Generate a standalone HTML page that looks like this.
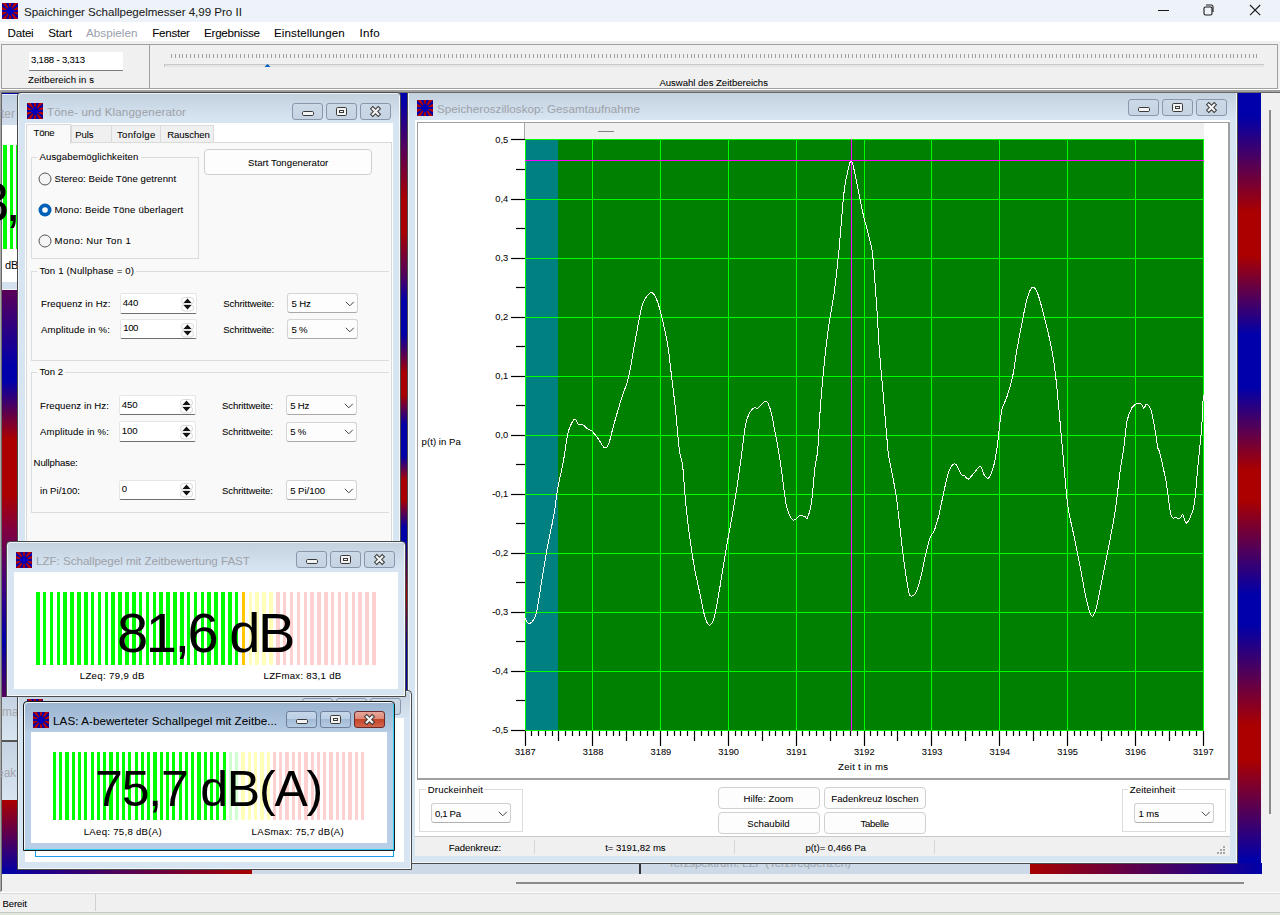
<!DOCTYPE html><html><head><meta charset="utf-8"><style>
html,body{margin:0;padding:0;width:1280px;height:915px;overflow:hidden;background:#f0f0f0;font-family:"Liberation Sans", sans-serif;}
div{box-sizing:border-box;}
.t{position:absolute;white-space:nowrap;-webkit-text-stroke:0.05px currentColor;}
.big{-webkit-text-stroke:0;}
</style></head><body>
<div style="position:absolute;left:0px;top:0px;width:1280px;height:22px;background:#eef2f9"></div>
<svg style="position:absolute;left:2px;top:3px" width="16" height="16" viewBox="0 0 16 16"><rect width="16" height="16" fill="#0000b0"/><g fill="#b00000"><polygon points="8.0,8.0 4.83,-10.94 11.17,-10.94"/><polygon points="8.0,8.0 16.57,-9.18 21.69,-5.46"/><polygon points="8.0,8.0 25.03,-0.87 26.99,5.16"/><polygon points="8.0,8.0 26.99,10.84 25.03,16.87"/><polygon points="8.0,8.0 21.69,21.46 16.57,25.18"/><polygon points="8.0,8.0 11.17,26.94 4.83,26.94"/><polygon points="8.0,8.0 -0.57,25.18 -5.69,21.46"/><polygon points="8.0,8.0 -9.03,16.87 -10.99,10.84"/><polygon points="8.0,8.0 -10.99,5.16 -9.03,-0.87"/><polygon points="8.0,8.0 -5.69,-5.46 -0.57,-9.18"/></g><polygon points="8.0,3.5 13.0,8.0 8.0,12.5 3.0,8.0" fill="#0000b8"/></svg>
<div class="t" style="left:24.00px;top:6.28px;font-size:11.60px;line-height:11.60px;letter-spacing:-0.031px;color:#1a1a1a">Spaichinger Schallpegelmesser 4,99 Pro II</div>
<div style="position:absolute;left:1158px;top:10px;width:11px;height:1px;background:#1a1a1a"></div>
<svg style="position:absolute;left:1200px;top:1px" width="16" height="16"><rect x="4" y="6" width="8" height="8" rx="1.5" fill="none" stroke="#1a1a1a" stroke-width="1.1"/><path d="M6 4h5.2a1.8 1.8 0 0 1 1.8 1.8v5.2" fill="none" stroke="#1a1a1a" stroke-width="1.1"/></svg>
<svg style="position:absolute;left:1247px;top:2px" width="16" height="16"><path d="M3 3L13.2 13.2M13.2 3L3 13.2" stroke="#1a1a1a" stroke-width="1.1"/></svg>
<div style="position:absolute;left:0px;top:22px;width:1280px;height:19px;background:#fff"></div>
<div class="t" style="left:7.50px;top:27.08px;font-size:11.60px;line-height:11.60px;letter-spacing:-0.220px;color:#000">Datei</div>
<div class="t" style="left:48.30px;top:27.08px;font-size:11.60px;line-height:11.60px;letter-spacing:-0.199px;color:#000">Start</div>
<div class="t" style="left:86.00px;top:27.08px;font-size:11.60px;line-height:11.60px;letter-spacing:0.069px;color:#9aa2ac">Abspielen</div>
<div class="t" style="left:152.20px;top:27.08px;font-size:11.60px;line-height:11.60px;letter-spacing:-0.254px;color:#000">Fenster</div>
<div class="t" style="left:204.00px;top:27.08px;font-size:11.60px;line-height:11.60px;letter-spacing:-0.226px;color:#000">Ergebnisse</div>
<div class="t" style="left:274.00px;top:27.08px;font-size:11.60px;line-height:11.60px;letter-spacing:0.088px;color:#000">Einstellungen</div>
<div class="t" style="left:359.40px;top:27.08px;font-size:11.60px;line-height:11.60px;letter-spacing:0.318px;color:#000">Info</div>
<div style="position:absolute;left:1px;top:44px;width:1277px;height:45px;border:1px solid #a0a0a0;background:#f0f0f0"></div>
<div style="position:absolute;left:0px;top:89px;width:1280px;height:1px;background:#fff"></div>
<div style="position:absolute;left:149px;top:45px;width:1px;height:43px;background:#a0a0a0"></div>
<div style="position:absolute;left:29px;top:52px;width:94px;height:19px;background:#fff;border-bottom:1px solid #7a7a7a"></div>
<div class="t" style="left:31.00px;top:55.47px;font-size:9.60px;line-height:9.60px;letter-spacing:-0.206px;color:#000">3,188 - 3,313</div>
<div class="t" style="left:28.00px;top:75.47px;font-size:9.60px;line-height:9.60px;letter-spacing:0.061px;color:#000">Zeitbereich in s</div>
<svg style="position:absolute;left:0;top:54px" width="1280" height="5"><g fill="#a0a0a0"><rect x="171" y="0" width="1" height="4"/><rect x="175" y="0" width="1" height="4"/><rect x="179" y="0" width="1" height="4"/><rect x="182" y="0" width="1" height="4"/><rect x="186" y="0" width="1" height="4"/><rect x="190" y="0" width="1" height="4"/><rect x="194" y="0" width="1" height="4"/><rect x="198" y="0" width="1" height="4"/><rect x="202" y="0" width="1" height="4"/><rect x="206" y="0" width="1" height="4"/><rect x="209" y="0" width="1" height="4"/><rect x="213" y="0" width="1" height="4"/><rect x="217" y="0" width="1" height="4"/><rect x="221" y="0" width="1" height="4"/><rect x="225" y="0" width="1" height="4"/><rect x="229" y="0" width="1" height="4"/><rect x="232" y="0" width="1" height="4"/><rect x="236" y="0" width="1" height="4"/><rect x="240" y="0" width="1" height="4"/><rect x="244" y="0" width="1" height="4"/><rect x="248" y="0" width="1" height="4"/><rect x="252" y="0" width="1" height="4"/><rect x="256" y="0" width="1" height="4"/><rect x="259" y="0" width="1" height="4"/><rect x="263" y="0" width="1" height="4"/><rect x="267" y="0" width="1" height="4"/><rect x="271" y="0" width="1" height="4"/><rect x="275" y="0" width="1" height="4"/><rect x="279" y="0" width="1" height="4"/><rect x="283" y="0" width="1" height="4"/><rect x="286" y="0" width="1" height="4"/><rect x="290" y="0" width="1" height="4"/><rect x="294" y="0" width="1" height="4"/><rect x="298" y="0" width="1" height="4"/><rect x="302" y="0" width="1" height="4"/><rect x="306" y="0" width="1" height="4"/><rect x="309" y="0" width="1" height="4"/><rect x="313" y="0" width="1" height="4"/><rect x="317" y="0" width="1" height="4"/><rect x="321" y="0" width="1" height="4"/><rect x="325" y="0" width="1" height="4"/><rect x="329" y="0" width="1" height="4"/><rect x="333" y="0" width="1" height="4"/><rect x="336" y="0" width="1" height="4"/><rect x="340" y="0" width="1" height="4"/><rect x="344" y="0" width="1" height="4"/><rect x="348" y="0" width="1" height="4"/><rect x="352" y="0" width="1" height="4"/><rect x="356" y="0" width="1" height="4"/><rect x="360" y="0" width="1" height="4"/><rect x="363" y="0" width="1" height="4"/><rect x="367" y="0" width="1" height="4"/><rect x="371" y="0" width="1" height="4"/><rect x="375" y="0" width="1" height="4"/><rect x="379" y="0" width="1" height="4"/><rect x="383" y="0" width="1" height="4"/><rect x="386" y="0" width="1" height="4"/><rect x="390" y="0" width="1" height="4"/><rect x="394" y="0" width="1" height="4"/><rect x="398" y="0" width="1" height="4"/><rect x="402" y="0" width="1" height="4"/><rect x="406" y="0" width="1" height="4"/><rect x="410" y="0" width="1" height="4"/><rect x="413" y="0" width="1" height="4"/><rect x="417" y="0" width="1" height="4"/><rect x="421" y="0" width="1" height="4"/><rect x="425" y="0" width="1" height="4"/><rect x="429" y="0" width="1" height="4"/><rect x="433" y="0" width="1" height="4"/><rect x="437" y="0" width="1" height="4"/><rect x="440" y="0" width="1" height="4"/><rect x="444" y="0" width="1" height="4"/><rect x="448" y="0" width="1" height="4"/><rect x="452" y="0" width="1" height="4"/><rect x="456" y="0" width="1" height="4"/><rect x="460" y="0" width="1" height="4"/><rect x="463" y="0" width="1" height="4"/><rect x="467" y="0" width="1" height="4"/><rect x="471" y="0" width="1" height="4"/><rect x="475" y="0" width="1" height="4"/><rect x="479" y="0" width="1" height="4"/><rect x="483" y="0" width="1" height="4"/><rect x="487" y="0" width="1" height="4"/><rect x="490" y="0" width="1" height="4"/><rect x="494" y="0" width="1" height="4"/><rect x="498" y="0" width="1" height="4"/><rect x="502" y="0" width="1" height="4"/><rect x="506" y="0" width="1" height="4"/><rect x="510" y="0" width="1" height="4"/><rect x="514" y="0" width="1" height="4"/><rect x="517" y="0" width="1" height="4"/><rect x="521" y="0" width="1" height="4"/><rect x="525" y="0" width="1" height="4"/><rect x="529" y="0" width="1" height="4"/><rect x="533" y="0" width="1" height="4"/><rect x="537" y="0" width="1" height="4"/><rect x="540" y="0" width="1" height="4"/><rect x="544" y="0" width="1" height="4"/><rect x="548" y="0" width="1" height="4"/><rect x="552" y="0" width="1" height="4"/><rect x="556" y="0" width="1" height="4"/><rect x="560" y="0" width="1" height="4"/><rect x="564" y="0" width="1" height="4"/><rect x="567" y="0" width="1" height="4"/><rect x="571" y="0" width="1" height="4"/><rect x="575" y="0" width="1" height="4"/><rect x="579" y="0" width="1" height="4"/><rect x="583" y="0" width="1" height="4"/><rect x="587" y="0" width="1" height="4"/><rect x="591" y="0" width="1" height="4"/><rect x="594" y="0" width="1" height="4"/><rect x="598" y="0" width="1" height="4"/><rect x="602" y="0" width="1" height="4"/><rect x="606" y="0" width="1" height="4"/><rect x="610" y="0" width="1" height="4"/><rect x="614" y="0" width="1" height="4"/><rect x="617" y="0" width="1" height="4"/><rect x="621" y="0" width="1" height="4"/><rect x="625" y="0" width="1" height="4"/><rect x="629" y="0" width="1" height="4"/><rect x="633" y="0" width="1" height="4"/><rect x="637" y="0" width="1" height="4"/><rect x="641" y="0" width="1" height="4"/><rect x="644" y="0" width="1" height="4"/><rect x="648" y="0" width="1" height="4"/><rect x="652" y="0" width="1" height="4"/><rect x="656" y="0" width="1" height="4"/><rect x="660" y="0" width="1" height="4"/><rect x="664" y="0" width="1" height="4"/><rect x="667" y="0" width="1" height="4"/><rect x="671" y="0" width="1" height="4"/><rect x="675" y="0" width="1" height="4"/><rect x="679" y="0" width="1" height="4"/><rect x="683" y="0" width="1" height="4"/><rect x="687" y="0" width="1" height="4"/><rect x="691" y="0" width="1" height="4"/><rect x="694" y="0" width="1" height="4"/><rect x="698" y="0" width="1" height="4"/><rect x="702" y="0" width="1" height="4"/><rect x="706" y="0" width="1" height="4"/><rect x="710" y="0" width="1" height="4"/><rect x="714" y="0" width="1" height="4"/><rect x="718" y="0" width="1" height="4"/><rect x="721" y="0" width="1" height="4"/><rect x="725" y="0" width="1" height="4"/><rect x="729" y="0" width="1" height="4"/><rect x="733" y="0" width="1" height="4"/><rect x="737" y="0" width="1" height="4"/><rect x="741" y="0" width="1" height="4"/><rect x="744" y="0" width="1" height="4"/><rect x="748" y="0" width="1" height="4"/><rect x="752" y="0" width="1" height="4"/><rect x="756" y="0" width="1" height="4"/><rect x="760" y="0" width="1" height="4"/><rect x="764" y="0" width="1" height="4"/><rect x="768" y="0" width="1" height="4"/><rect x="771" y="0" width="1" height="4"/><rect x="775" y="0" width="1" height="4"/><rect x="779" y="0" width="1" height="4"/><rect x="783" y="0" width="1" height="4"/><rect x="787" y="0" width="1" height="4"/><rect x="791" y="0" width="1" height="4"/><rect x="795" y="0" width="1" height="4"/><rect x="798" y="0" width="1" height="4"/><rect x="802" y="0" width="1" height="4"/><rect x="806" y="0" width="1" height="4"/><rect x="810" y="0" width="1" height="4"/><rect x="814" y="0" width="1" height="4"/><rect x="818" y="0" width="1" height="4"/><rect x="821" y="0" width="1" height="4"/><rect x="825" y="0" width="1" height="4"/><rect x="829" y="0" width="1" height="4"/><rect x="833" y="0" width="1" height="4"/><rect x="837" y="0" width="1" height="4"/><rect x="841" y="0" width="1" height="4"/><rect x="845" y="0" width="1" height="4"/><rect x="848" y="0" width="1" height="4"/><rect x="852" y="0" width="1" height="4"/><rect x="856" y="0" width="1" height="4"/><rect x="860" y="0" width="1" height="4"/><rect x="864" y="0" width="1" height="4"/><rect x="868" y="0" width="1" height="4"/><rect x="872" y="0" width="1" height="4"/><rect x="875" y="0" width="1" height="4"/><rect x="879" y="0" width="1" height="4"/><rect x="883" y="0" width="1" height="4"/><rect x="887" y="0" width="1" height="4"/><rect x="891" y="0" width="1" height="4"/><rect x="895" y="0" width="1" height="4"/><rect x="898" y="0" width="1" height="4"/><rect x="902" y="0" width="1" height="4"/><rect x="906" y="0" width="1" height="4"/><rect x="910" y="0" width="1" height="4"/><rect x="914" y="0" width="1" height="4"/><rect x="918" y="0" width="1" height="4"/><rect x="922" y="0" width="1" height="4"/><rect x="925" y="0" width="1" height="4"/><rect x="929" y="0" width="1" height="4"/><rect x="933" y="0" width="1" height="4"/><rect x="937" y="0" width="1" height="4"/><rect x="941" y="0" width="1" height="4"/><rect x="945" y="0" width="1" height="4"/><rect x="949" y="0" width="1" height="4"/><rect x="952" y="0" width="1" height="4"/><rect x="956" y="0" width="1" height="4"/><rect x="960" y="0" width="1" height="4"/><rect x="964" y="0" width="1" height="4"/><rect x="968" y="0" width="1" height="4"/><rect x="972" y="0" width="1" height="4"/><rect x="975" y="0" width="1" height="4"/><rect x="979" y="0" width="1" height="4"/><rect x="983" y="0" width="1" height="4"/><rect x="987" y="0" width="1" height="4"/><rect x="991" y="0" width="1" height="4"/><rect x="995" y="0" width="1" height="4"/><rect x="999" y="0" width="1" height="4"/><rect x="1002" y="0" width="1" height="4"/><rect x="1006" y="0" width="1" height="4"/><rect x="1010" y="0" width="1" height="4"/><rect x="1014" y="0" width="1" height="4"/><rect x="1018" y="0" width="1" height="4"/><rect x="1022" y="0" width="1" height="4"/><rect x="1026" y="0" width="1" height="4"/><rect x="1029" y="0" width="1" height="4"/><rect x="1033" y="0" width="1" height="4"/><rect x="1037" y="0" width="1" height="4"/><rect x="1041" y="0" width="1" height="4"/><rect x="1045" y="0" width="1" height="4"/><rect x="1049" y="0" width="1" height="4"/><rect x="1052" y="0" width="1" height="4"/><rect x="1056" y="0" width="1" height="4"/><rect x="1060" y="0" width="1" height="4"/><rect x="1064" y="0" width="1" height="4"/><rect x="1068" y="0" width="1" height="4"/><rect x="1072" y="0" width="1" height="4"/><rect x="1076" y="0" width="1" height="4"/><rect x="1079" y="0" width="1" height="4"/><rect x="1083" y="0" width="1" height="4"/><rect x="1087" y="0" width="1" height="4"/><rect x="1091" y="0" width="1" height="4"/><rect x="1095" y="0" width="1" height="4"/><rect x="1099" y="0" width="1" height="4"/><rect x="1103" y="0" width="1" height="4"/><rect x="1106" y="0" width="1" height="4"/><rect x="1110" y="0" width="1" height="4"/><rect x="1114" y="0" width="1" height="4"/><rect x="1118" y="0" width="1" height="4"/><rect x="1122" y="0" width="1" height="4"/><rect x="1126" y="0" width="1" height="4"/><rect x="1129" y="0" width="1" height="4"/><rect x="1133" y="0" width="1" height="4"/><rect x="1137" y="0" width="1" height="4"/><rect x="1141" y="0" width="1" height="4"/><rect x="1145" y="0" width="1" height="4"/><rect x="1149" y="0" width="1" height="4"/><rect x="1153" y="0" width="1" height="4"/><rect x="1156" y="0" width="1" height="4"/><rect x="1160" y="0" width="1" height="4"/><rect x="1164" y="0" width="1" height="4"/><rect x="1168" y="0" width="1" height="4"/><rect x="1172" y="0" width="1" height="4"/><rect x="1176" y="0" width="1" height="4"/><rect x="1179" y="0" width="1" height="4"/><rect x="1183" y="0" width="1" height="4"/><rect x="1187" y="0" width="1" height="4"/><rect x="1191" y="0" width="1" height="4"/><rect x="1195" y="0" width="1" height="4"/><rect x="1199" y="0" width="1" height="4"/><rect x="1203" y="0" width="1" height="4"/><rect x="1206" y="0" width="1" height="4"/><rect x="1210" y="0" width="1" height="4"/><rect x="1214" y="0" width="1" height="4"/><rect x="1218" y="0" width="1" height="4"/><rect x="1222" y="0" width="1" height="4"/><rect x="1226" y="0" width="1" height="4"/><rect x="1230" y="0" width="1" height="4"/><rect x="1233" y="0" width="1" height="4"/><rect x="1237" y="0" width="1" height="4"/><rect x="1241" y="0" width="1" height="4"/><rect x="1245" y="0" width="1" height="4"/><rect x="1249" y="0" width="1" height="4"/><rect x="1253" y="0" width="1" height="4"/><rect x="1256" y="0" width="1" height="4"/></g></svg>
<div style="position:absolute;left:164px;top:64px;width:1100px;height:3px;background:#e4e4e4;border-top:1px solid #c8c8c8;border-left:1px solid #c8c8c8"></div>
<svg style="position:absolute;left:264px;top:63px" width="8" height="5"><path d="M0.5 4L3.5 1L6.5 4Z" fill="#0060c0"/></svg>
<div class="t" style="left:659.40px;top:77.87px;font-size:9.60px;line-height:9.60px;letter-spacing:-0.034px;color:#000">Auswahl des Zeitbereichs</div>
<div style="position:absolute;left:0px;top:90px;width:1280px;height:2px;background:#a0a0a0"></div>
<div style="position:absolute;left:0px;top:92px;width:1280px;height:1px;background:#696969"></div>
<div style="position:absolute;left:0px;top:90px;width:1px;height:802px;background:#a8a8a8"></div>
<div style="position:absolute;left:1px;top:92px;width:1px;height:799px;background:#696969"></div>
<div style="position:absolute;left:2px;top:93px;width:1276px;height:798px;background:#f0f0f0"></div>
<div style="position:absolute;left:1269px;top:110px;width:2px;height:704px;background:#8a8a8a"></div>
<div style="position:absolute;left:516px;top:882px;width:728px;height:2px;background:#8a8a8a"></div>
<div style="position:absolute;left:2px;top:93px;width:15px;height:781px;background:linear-gradient(#0000aa 0px,#5a0058 197px,#0000aa 273px,#0000aa 288px,#aa0000 346px,#aa0000 401px,#800040 437px,#300090 507px,#0000aa 549px,#5a0058 607px,#aa0000 707px,#0000aa 781px)"></div>
<div style="position:absolute;left:400px;top:93px;width:8px;height:781px;background:linear-gradient(#0000aa 0px,#0000aa 7px,#500060 52px,#aa0000 106px,#aa0000 139px,#500060 183px,#0000aa 208px,#0000aa 241px,#aa0000 280px,#aa0000 302px,#0000aa 332px,#0000aa 363px,#aa0000 387px,#aa0000 407px,#0000aa 435px,#0000aa 449px,#aa0000 502px,#0000aa 555px,#0000aa 781px)"></div>
<div style="position:absolute;left:1238px;top:93px;width:23px;height:781px;background:linear-gradient(#0000aa 0px,#0000aa 23px,#aa0000 119px,#aa0000 163px,#0000aa 242px,#0000aa 294px,#aa0000 377px,#aa0000 407px,#0000aa 502px,#0000aa 532px,#aa0000 632px,#aa0000 667px,#0000aa 767px,#0000aa 781px)"></div>
<div style="position:absolute;left:250px;top:863px;width:780px;height:11px;background:#cdd9e6"></div>
<div style="position:absolute;left:1030px;top:863px;width:232px;height:11px;background:linear-gradient(90deg,#a80000,#0000a8)"></div>
<div style="position:absolute;left:2px;top:869px;width:250px;height:5px;background:linear-gradient(90deg,#0000a8,#a80000)"></div>
<div style="position:absolute;left:639px;top:863px;width:2px;height:11px;background:#333"></div>
<div style="position:absolute;left:0px;top:892px;width:1280px;height:1px;background:#fff"></div>
<div style="position:absolute;left:0px;top:893px;width:1280px;height:19px;background:#f0f0f0"></div>
<div style="position:absolute;left:0px;top:893px;width:1280px;height:1px;background:#dadada"></div>
<div style="position:absolute;left:95px;top:894px;width:1px;height:17px;background:#d0d0d0"></div>
<div style="position:absolute;left:0px;top:912px;width:1280px;height:1px;background:#c8c8c8"></div>
<div style="position:absolute;left:0px;top:913px;width:1280px;height:2px;background:#dfe8d8"></div>
<div class="t" style="left:2.50px;top:898.57px;font-size:9.60px;line-height:9.60px;letter-spacing:-0.115px;color:#000">Bereit</div>
<div style="position:absolute;left:2px;top:93px;width:15px;height:190px;background:linear-gradient(#c0cfdf,#d0ddeb 30px,#d6e3f1)"></div>
<div style="position:absolute;left:2px;top:93px;width:17px;height:1px;background:#0000a8"></div>
<div style="position:absolute;left:2px;top:94px;width:15px;height:1px;background:#e4ecf4"></div>
<div class="t" style="left:1.00px;top:107.84px;font-size:12.00px;line-height:12.00px;letter-spacing:0.000px;color:#a8a8b0">ter</div>
<div style="position:absolute;left:2px;top:125px;width:15px;height:157px;background:#fff"></div>
<div style="position:absolute;left:3px;top:145px;width:4.4px;height:104px;background:#00ff00"></div>
<div style="position:absolute;left:9.8px;top:145px;width:3.3px;height:104px;background:#00ff00"></div>
<div style="position:absolute;left:15.6px;top:145px;width:1.6px;height:104px;background:#00ff00"></div>
<div class="t big" style="left:-21.60px;top:174.94px;font-size:55.00px;line-height:55.00px;letter-spacing:0.000px;color:#000">3</div>
<div class="t big" style="left:5.60px;top:174.94px;font-size:55.00px;line-height:55.00px;letter-spacing:0.000px;color:#000">,</div>
<div class="t" style="left:5.00px;top:259.59px;font-size:11.00px;line-height:11.00px;letter-spacing:0.000px;color:#000">dB</div>
<div style="position:absolute;left:2px;top:282px;width:15px;height:7px;background:#d4e1ee"></div>
<div style="position:absolute;left:2px;top:289px;width:15px;height:1px;background:#f4f4f4"></div>
<div style="position:absolute;left:2px;top:697px;width:15px;height:43px;background:linear-gradient(#c5d3e2,#d8e4f0)"></div>
<div class="t" style="left:2.00px;top:705.84px;font-size:12.00px;line-height:12.00px;letter-spacing:0.000px;color:#a8a8b0">ma</div>
<div style="position:absolute;left:2px;top:740px;width:15px;height:2px;background:#555"></div>
<div style="position:absolute;left:2px;top:742px;width:15px;height:58px;background:linear-gradient(#c5d3e2,#d8e4f0)"></div>
<div class="t" style="left:-3.00px;top:766.84px;font-size:12.00px;line-height:12.00px;letter-spacing:0.000px;color:#a8a8b0">eak</div>
<div class="t" style="left:668.00px;top:856.98px;font-size:11.60px;line-height:11.60px;letter-spacing:-0.139px;color:#a0a8b0">Terzspektrum: LZF (Terzfrequenzen)</div>
<div style="position:absolute;left:407px;top:91px;width:831px;height:773px;border:1px solid #4a4a4a;border-radius:0px 0px 0 0;box-shadow:inset 1px 1px 0 #eef3f8,inset -1px -1px 0 #f6f9fc;background:linear-gradient(#c3d1df,#d7e4f1 27px,#d7e4f1)"></div>
<div style="position:absolute;left:407px;top:90px;width:831px;height:2px;background:#a0a0a0"></div>
<div style="position:absolute;left:407px;top:92px;width:831px;height:1px;background:#696969"></div>
<svg style="position:absolute;left:417px;top:100px" width="16" height="16" viewBox="0 0 16 16"><rect width="16" height="16" fill="#0000b0"/><g fill="#b00000"><polygon points="8.0,8.0 4.83,-10.94 11.17,-10.94"/><polygon points="8.0,8.0 16.57,-9.18 21.69,-5.46"/><polygon points="8.0,8.0 25.03,-0.87 26.99,5.16"/><polygon points="8.0,8.0 26.99,10.84 25.03,16.87"/><polygon points="8.0,8.0 21.69,21.46 16.57,25.18"/><polygon points="8.0,8.0 11.17,26.94 4.83,26.94"/><polygon points="8.0,8.0 -0.57,25.18 -5.69,21.46"/><polygon points="8.0,8.0 -9.03,16.87 -10.99,10.84"/><polygon points="8.0,8.0 -10.99,5.16 -9.03,-0.87"/><polygon points="8.0,8.0 -5.69,-5.46 -0.57,-9.18"/></g><polygon points="8.0,3.5 13.0,8.0 8.0,12.5 3.0,8.0" fill="#0000b8"/></svg>
<div class="t" style="left:437.00px;top:103.18px;font-size:11.60px;line-height:11.60px;letter-spacing:0.054px;color:#9ea3aa">Speicheroszilloskop: Gesamtaufnahme</div>
<div style="position:absolute;left:1128px;top:99px;width:31px;height:17px;border:1px solid #8a96ab;border-radius:3px;background:linear-gradient(#ccd9e7,#c5d3e2)"></div>
<div style="position:absolute;left:1162px;top:99px;width:31px;height:17px;border:1px solid #8a96ab;border-radius:3px;background:linear-gradient(#ccd9e7,#c5d3e2)"></div>
<div style="position:absolute;left:1196px;top:99px;width:31px;height:17px;border:1px solid #8a96ab;border-radius:3px;background:linear-gradient(#ccd9e7,#c5d3e2)"></div>
<svg style="position:absolute;left:1128px;top:99px" width="31" height="17"><rect x="10.5" y="8.5" width="11" height="4" rx="1.2" fill="#f4f4f4" stroke="#3a3a3a"/></svg>
<svg style="position:absolute;left:1162px;top:99px" width="31" height="17"><rect x="10.5" y="4.5" width="10" height="8" rx="1.2" fill="#f4f4f4" stroke="#3a3a3a"/><rect x="13.5" y="7.5" width="4" height="2" fill="none" stroke="#3a3a3a"/></svg>
<svg style="position:absolute;left:1196px;top:99px" width="31" height="17"><path d="M12.8 5.8L18.2 11.2M18.2 5.8L12.8 11.2" stroke="#3a3a3a" stroke-width="4.2" stroke-linecap="square"/><path d="M12.8 5.8L18.2 11.2M18.2 5.8L12.8 11.2" stroke="#f4f4f4" stroke-width="2.2" stroke-linecap="square"/></svg>
<div style="position:absolute;left:415px;top:120px;width:815px;height:736px;background:#fff"></div>
<div style="position:absolute;left:417px;top:122px;width:813px;height:658px;border:1px solid #a0a0a0;border-right:2px solid #a0a0a0;border-bottom:2px solid #a0a0a0;background:#fff"></div>
<div style="position:absolute;left:525px;top:123px;width:679px;height:16px;background:#f0f0f0"></div>
<div style="position:absolute;left:598px;top:131px;width:16px;height:1px;background:#808080"></div>
<div style="position:absolute;left:524px;top:123px;width:1px;height:16px;background:#a8a8a8"></div>
<svg style="position:absolute;left:0;top:0" width="1280" height="915"><rect x="525" y="139" width="679" height="592" fill="#008000"/><rect x="525" y="139" width="33" height="592" fill="#008080"/><line x1="525.5" y1="139" x2="525.5" y2="731" stroke="#00ff00" stroke-width="1"/><line x1="592.5" y1="139" x2="592.5" y2="731" stroke="#00ff00" stroke-width="1"/><line x1="660.5" y1="139" x2="660.5" y2="731" stroke="#00ff00" stroke-width="1"/><line x1="728.5" y1="139" x2="728.5" y2="731" stroke="#00ff00" stroke-width="1"/><line x1="796.5" y1="139" x2="796.5" y2="731" stroke="#00ff00" stroke-width="1"/><line x1="864.5" y1="139" x2="864.5" y2="731" stroke="#00ff00" stroke-width="1"/><line x1="931.5" y1="139" x2="931.5" y2="731" stroke="#00ff00" stroke-width="1"/><line x1="999.5" y1="139" x2="999.5" y2="731" stroke="#00ff00" stroke-width="1"/><line x1="1067.5" y1="139" x2="1067.5" y2="731" stroke="#00ff00" stroke-width="1"/><line x1="1135.5" y1="139" x2="1135.5" y2="731" stroke="#00ff00" stroke-width="1"/><line x1="1203.5" y1="139" x2="1203.5" y2="731" stroke="#00ff00" stroke-width="1"/><line x1="525" y1="139.5" x2="1204" y2="139.5" stroke="#00ff00" stroke-width="1"/><line x1="525" y1="199.5" x2="1204" y2="199.5" stroke="#00ff00" stroke-width="1"/><line x1="525" y1="258.5" x2="1204" y2="258.5" stroke="#00ff00" stroke-width="1"/><line x1="525" y1="317.5" x2="1204" y2="317.5" stroke="#00ff00" stroke-width="1"/><line x1="525" y1="376.5" x2="1204" y2="376.5" stroke="#00ff00" stroke-width="1"/><line x1="525" y1="435.5" x2="1204" y2="435.5" stroke="#00ff00" stroke-width="1"/><line x1="525" y1="494.5" x2="1204" y2="494.5" stroke="#00ff00" stroke-width="1"/><line x1="525" y1="553.5" x2="1204" y2="553.5" stroke="#00ff00" stroke-width="1"/><line x1="525" y1="612.5" x2="1204" y2="612.5" stroke="#00ff00" stroke-width="1"/><line x1="525" y1="671.5" x2="1204" y2="671.5" stroke="#00ff00" stroke-width="1"/><line x1="525" y1="730.5" x2="1204" y2="730.5" stroke="#00ff00" stroke-width="1"/><line x1="525" y1="160.5" x2="1204" y2="160.5" stroke="#ff00ff" stroke-width="1"/><line x1="851.5" y1="139" x2="851.5" y2="731" stroke="#ff00ff" stroke-width="1"/><path d="M525.10,618.20 C525.67,619.05 527.08,623.02 528.50,623.30 C529.92,623.58 532.18,622.17 533.60,619.90 C535.02,617.63 535.60,616.48 537.00,609.70 C538.40,602.92 540.32,589.37 542.00,579.20 C543.68,569.03 545.12,559.43 547.10,548.70 C549.08,537.97 552.20,524.42 553.90,514.80 C555.60,505.18 556.17,497.78 557.30,491.00 C558.43,484.22 559.57,479.75 560.70,474.10 C561.83,468.45 562.97,463.60 564.10,457.10 C565.23,450.60 566.37,440.48 567.50,435.10 C568.63,429.72 569.67,427.47 570.90,424.80 C572.13,422.13 573.67,419.20 574.90,419.10 C576.13,419.00 577.00,423.25 578.30,424.20 C579.60,425.15 581.12,424.02 582.70,424.80 C584.28,425.58 586.27,427.87 587.80,428.90 C589.33,429.93 590.20,429.42 591.90,431.00 C593.60,432.58 595.90,435.60 598.00,438.40 C600.10,441.20 602.70,446.95 604.50,447.80 C606.30,448.65 607.33,447.05 608.80,443.50 C610.27,439.95 611.15,434.13 613.30,426.50 C615.45,418.87 619.17,405.88 621.70,397.70 C624.23,389.52 626.23,387.00 628.50,377.40 C630.77,367.80 633.32,350.85 635.30,340.10 C637.28,329.35 638.98,319.40 640.40,312.90 C641.82,306.40 641.93,304.48 643.80,301.10 C645.67,297.72 649.35,292.60 651.60,292.60 C653.85,292.60 655.50,296.58 657.30,301.10 C659.10,305.62 660.70,312.63 662.40,319.70 C664.10,326.77 666.08,335.02 667.50,343.50 C668.92,351.98 669.60,359.87 670.90,370.60 C672.20,381.33 673.88,394.67 675.30,407.90 C676.72,421.13 678.15,440.10 679.40,450.00 C680.65,459.90 681.67,457.63 682.80,467.30 C683.93,476.97 684.52,492.73 686.20,508.00 C687.88,523.27 690.65,544.77 692.90,558.90 C695.15,573.03 697.72,583.20 699.70,592.80 C701.68,602.40 703.22,611.13 704.80,616.50 C706.38,621.87 707.67,624.72 709.20,625.00 C710.73,625.28 712.18,624.70 714.00,618.20 C715.82,611.70 717.97,598.15 720.10,586.00 C722.23,573.85 724.55,558.30 726.80,545.30 C729.05,532.30 731.33,521.57 733.60,508.00 C735.87,494.43 738.42,477.77 740.40,463.90 C742.38,450.03 743.80,433.57 745.50,424.80 C747.20,416.03 749.03,414.23 750.60,411.30 C752.17,408.37 753.77,407.65 754.90,407.20 C756.03,406.75 756.32,409.05 757.40,408.60 C758.48,408.15 759.88,405.75 761.40,404.50 C762.92,403.25 764.92,399.97 766.50,401.10 C768.08,402.23 769.60,406.78 770.90,411.30 C772.20,415.82 773.05,421.75 774.30,428.20 C775.55,434.65 777.27,443.48 778.40,450.00 C779.53,456.52 779.80,458.20 781.10,467.30 C782.40,476.40 784.50,496.12 786.20,504.60 C787.90,513.08 789.88,515.65 791.30,518.20 C792.72,520.75 793.28,520.35 794.70,519.90 C796.12,519.45 798.12,516.07 799.80,515.50 C801.48,514.93 803.50,516.17 804.80,516.50 C806.10,516.83 806.47,520.05 807.60,517.50 C808.73,514.95 810.37,509.57 811.60,501.20 C812.83,492.83 813.98,475.83 815.00,467.30 C816.02,458.77 816.85,459.33 817.70,450.00 C818.55,440.67 819.13,424.53 820.10,411.30 C821.07,398.07 822.08,384.73 823.50,370.60 C824.92,356.47 826.90,338.93 828.60,326.50 C830.30,314.07 832.00,308.43 833.70,296.00 C835.40,283.57 837.12,268.85 838.80,251.90 C840.48,234.95 842.40,207.30 843.80,194.30 C845.20,181.30 845.95,179.45 847.20,173.90 C848.45,168.35 849.88,160.43 851.30,161.00 C852.72,161.57 853.83,168.93 855.70,177.30 C857.57,185.67 860.23,201.03 862.50,211.20 C864.77,221.37 867.60,230.95 869.30,238.30 C871.00,245.65 871.47,243.98 872.70,255.30 C873.93,266.62 875.58,290.38 876.70,306.20 C877.82,322.02 878.27,334.95 879.40,350.20 C880.53,365.45 882.08,381.07 883.50,397.70 C884.92,414.33 886.88,439.53 887.90,450.00 C888.92,460.47 888.18,452.53 889.60,460.50 C891.02,468.47 894.13,481.97 896.40,497.80 C898.67,513.63 901.22,540.23 903.20,555.50 C905.18,570.77 906.92,582.62 908.30,589.40 C909.68,596.18 910.08,596.02 911.50,596.20 C912.92,596.38 915.05,594.48 916.80,590.50 C918.55,586.52 920.57,578.17 922.00,572.30 C923.43,566.43 923.98,561.23 925.40,555.30 C926.82,549.37 929.08,540.65 930.50,536.70 C931.92,532.75 932.48,535.27 933.90,531.60 C935.32,527.93 937.32,521.47 939.00,514.70 C940.68,507.93 942.32,498.33 944.00,491.00 C945.68,483.67 947.23,475.22 949.10,470.70 C950.97,466.18 953.22,463.35 955.20,463.90 C957.18,464.45 959.47,472.03 961.00,474.00 C962.53,475.97 963.17,474.85 964.40,475.70 C965.63,476.55 966.72,479.67 968.40,479.10 C970.08,478.53 972.52,474.38 974.50,472.30 C976.48,470.22 978.60,466.03 980.30,466.60 C982.00,467.17 983.23,473.90 984.70,475.70 C986.17,477.50 987.52,479.37 989.10,477.40 C990.68,475.43 992.78,469.53 994.20,463.90 C995.62,458.27 996.37,452.42 997.60,443.60 C998.83,434.78 1000.08,418.68 1001.60,411.00 C1003.12,403.32 1004.88,403.15 1006.70,397.50 C1008.52,391.85 1010.80,385.02 1012.50,377.10 C1014.20,369.18 1015.32,359.03 1016.90,350.00 C1018.48,340.97 1020.32,331.37 1022.00,322.90 C1023.68,314.43 1025.32,305.12 1027.00,299.20 C1028.68,293.28 1030.40,288.53 1032.10,287.40 C1033.80,286.27 1035.50,288.73 1037.20,292.40 C1038.90,296.07 1040.33,302.05 1042.30,309.40 C1044.27,316.75 1047.03,327.47 1049.00,336.50 C1050.97,345.53 1052.68,354.00 1054.10,363.60 C1055.52,373.20 1056.37,382.82 1057.50,394.10 C1058.63,405.38 1060.05,421.93 1060.90,431.30 C1061.75,440.67 1061.47,438.10 1062.60,450.30 C1063.73,462.50 1065.72,489.82 1067.70,504.50 C1069.68,519.18 1072.25,527.10 1074.50,538.40 C1076.75,549.70 1079.23,562.13 1081.20,572.30 C1083.17,582.47 1084.60,592.18 1086.30,599.40 C1088.00,606.62 1089.82,613.92 1091.40,615.60 C1092.98,617.28 1094.10,615.03 1095.80,609.50 C1097.50,603.97 1099.52,592.55 1101.60,582.40 C1103.68,572.25 1106.05,560.45 1108.30,548.60 C1110.55,536.75 1113.12,524.28 1115.10,511.30 C1117.08,498.32 1118.78,480.98 1120.20,470.70 C1121.62,460.42 1122.47,457.85 1123.60,449.60 C1124.73,441.35 1125.60,428.20 1127.00,421.20 C1128.40,414.20 1130.32,410.53 1132.00,407.60 C1133.68,404.67 1135.52,404.17 1137.10,403.60 C1138.68,403.03 1140.37,403.42 1141.50,404.20 C1142.63,404.98 1143.05,408.30 1143.90,408.30 C1144.75,408.30 1145.47,404.03 1146.60,404.20 C1147.73,404.37 1149.35,405.35 1150.70,409.30 C1152.05,413.25 1153.47,421.18 1154.70,427.90 C1155.93,434.62 1157.37,445.87 1158.10,449.60 C1158.83,453.33 1157.80,445.10 1159.10,450.30 C1160.40,455.50 1163.92,470.07 1165.90,480.80 C1167.88,491.53 1169.30,508.60 1171.00,514.70 C1172.70,520.80 1174.68,516.72 1176.10,517.40 C1177.52,518.08 1178.37,519.25 1179.50,518.80 C1180.63,518.35 1181.78,513.97 1182.90,514.70 C1184.02,515.43 1184.80,523.20 1186.20,523.20 C1187.60,523.20 1189.88,518.38 1191.30,514.70 C1192.72,511.02 1193.57,509.57 1194.70,501.10 C1195.83,492.63 1196.97,475.75 1198.10,463.90 C1199.23,452.05 1200.77,438.82 1201.50,430.00 C1202.23,421.18 1202.20,416.83 1202.50,411.00 C1202.80,405.17 1203.17,397.67 1203.30,395.00" fill="none" stroke="#ffffff" stroke-width="1" shape-rendering="crispEdges"/><line x1="511" y1="139.5" x2="525" y2="139.5" stroke="#000" stroke-width="1.2"/><line x1="511" y1="199.5" x2="525" y2="199.5" stroke="#000" stroke-width="1.2"/><line x1="511" y1="258.5" x2="525" y2="258.5" stroke="#000" stroke-width="1.2"/><line x1="511" y1="317.5" x2="525" y2="317.5" stroke="#000" stroke-width="1.2"/><line x1="511" y1="376.5" x2="525" y2="376.5" stroke="#000" stroke-width="1.2"/><line x1="511" y1="435.5" x2="525" y2="435.5" stroke="#000" stroke-width="1.2"/><line x1="511" y1="494.5" x2="525" y2="494.5" stroke="#000" stroke-width="1.2"/><line x1="511" y1="553.5" x2="525" y2="553.5" stroke="#000" stroke-width="1.2"/><line x1="511" y1="612.5" x2="525" y2="612.5" stroke="#000" stroke-width="1.2"/><line x1="511" y1="671.5" x2="525" y2="671.5" stroke="#000" stroke-width="1.2"/><line x1="511" y1="730.5" x2="525" y2="730.5" stroke="#000" stroke-width="1.2"/><line x1="516" y1="169.5" x2="525" y2="169.5" stroke="#000" stroke-width="1.2"/><line x1="516" y1="228.5" x2="525" y2="228.5" stroke="#000" stroke-width="1.2"/><line x1="516" y1="287.5" x2="525" y2="287.5" stroke="#000" stroke-width="1.2"/><line x1="516" y1="346.5" x2="525" y2="346.5" stroke="#000" stroke-width="1.2"/><line x1="516" y1="405.5" x2="525" y2="405.5" stroke="#000" stroke-width="1.2"/><line x1="516" y1="464.5" x2="525" y2="464.5" stroke="#000" stroke-width="1.2"/><line x1="516" y1="523.5" x2="525" y2="523.5" stroke="#000" stroke-width="1.2"/><line x1="516" y1="582.5" x2="525" y2="582.5" stroke="#000" stroke-width="1.2"/><line x1="516" y1="641.5" x2="525" y2="641.5" stroke="#000" stroke-width="1.2"/><line x1="516" y1="700.5" x2="525" y2="700.5" stroke="#000" stroke-width="1.2"/><line x1="525.5" y1="731" x2="525.5" y2="746" stroke="#000" stroke-width="1.2"/><line x1="531.5" y1="731" x2="531.5" y2="736" stroke="#000" stroke-width="1.2"/><line x1="538.5" y1="731" x2="538.5" y2="736" stroke="#000" stroke-width="1.2"/><line x1="545.5" y1="731" x2="545.5" y2="736" stroke="#000" stroke-width="1.2"/><line x1="552.5" y1="731" x2="552.5" y2="736" stroke="#000" stroke-width="1.2"/><line x1="558.5" y1="731" x2="558.5" y2="741" stroke="#000" stroke-width="1.2"/><line x1="565.5" y1="731" x2="565.5" y2="736" stroke="#000" stroke-width="1.2"/><line x1="572.5" y1="731" x2="572.5" y2="736" stroke="#000" stroke-width="1.2"/><line x1="579.5" y1="731" x2="579.5" y2="736" stroke="#000" stroke-width="1.2"/><line x1="586.5" y1="731" x2="586.5" y2="736" stroke="#000" stroke-width="1.2"/><line x1="592.5" y1="731" x2="592.5" y2="746" stroke="#000" stroke-width="1.2"/><line x1="599.5" y1="731" x2="599.5" y2="736" stroke="#000" stroke-width="1.2"/><line x1="606.5" y1="731" x2="606.5" y2="736" stroke="#000" stroke-width="1.2"/><line x1="613.5" y1="731" x2="613.5" y2="736" stroke="#000" stroke-width="1.2"/><line x1="619.5" y1="731" x2="619.5" y2="736" stroke="#000" stroke-width="1.2"/><line x1="626.5" y1="731" x2="626.5" y2="741" stroke="#000" stroke-width="1.2"/><line x1="633.5" y1="731" x2="633.5" y2="736" stroke="#000" stroke-width="1.2"/><line x1="640.5" y1="731" x2="640.5" y2="736" stroke="#000" stroke-width="1.2"/><line x1="647.5" y1="731" x2="647.5" y2="736" stroke="#000" stroke-width="1.2"/><line x1="653.5" y1="731" x2="653.5" y2="736" stroke="#000" stroke-width="1.2"/><line x1="660.5" y1="731" x2="660.5" y2="746" stroke="#000" stroke-width="1.2"/><line x1="667.5" y1="731" x2="667.5" y2="736" stroke="#000" stroke-width="1.2"/><line x1="674.5" y1="731" x2="674.5" y2="736" stroke="#000" stroke-width="1.2"/><line x1="680.5" y1="731" x2="680.5" y2="736" stroke="#000" stroke-width="1.2"/><line x1="687.5" y1="731" x2="687.5" y2="736" stroke="#000" stroke-width="1.2"/><line x1="694.5" y1="731" x2="694.5" y2="741" stroke="#000" stroke-width="1.2"/><line x1="701.5" y1="731" x2="701.5" y2="736" stroke="#000" stroke-width="1.2"/><line x1="708.5" y1="731" x2="708.5" y2="736" stroke="#000" stroke-width="1.2"/><line x1="714.5" y1="731" x2="714.5" y2="736" stroke="#000" stroke-width="1.2"/><line x1="721.5" y1="731" x2="721.5" y2="736" stroke="#000" stroke-width="1.2"/><line x1="728.5" y1="731" x2="728.5" y2="746" stroke="#000" stroke-width="1.2"/><line x1="735.5" y1="731" x2="735.5" y2="736" stroke="#000" stroke-width="1.2"/><line x1="741.5" y1="731" x2="741.5" y2="736" stroke="#000" stroke-width="1.2"/><line x1="748.5" y1="731" x2="748.5" y2="736" stroke="#000" stroke-width="1.2"/><line x1="755.5" y1="731" x2="755.5" y2="736" stroke="#000" stroke-width="1.2"/><line x1="762.5" y1="731" x2="762.5" y2="741" stroke="#000" stroke-width="1.2"/><line x1="769.5" y1="731" x2="769.5" y2="736" stroke="#000" stroke-width="1.2"/><line x1="775.5" y1="731" x2="775.5" y2="736" stroke="#000" stroke-width="1.2"/><line x1="782.5" y1="731" x2="782.5" y2="736" stroke="#000" stroke-width="1.2"/><line x1="789.5" y1="731" x2="789.5" y2="736" stroke="#000" stroke-width="1.2"/><line x1="796.5" y1="731" x2="796.5" y2="746" stroke="#000" stroke-width="1.2"/><line x1="802.5" y1="731" x2="802.5" y2="736" stroke="#000" stroke-width="1.2"/><line x1="809.5" y1="731" x2="809.5" y2="736" stroke="#000" stroke-width="1.2"/><line x1="816.5" y1="731" x2="816.5" y2="736" stroke="#000" stroke-width="1.2"/><line x1="823.5" y1="731" x2="823.5" y2="736" stroke="#000" stroke-width="1.2"/><line x1="830.5" y1="731" x2="830.5" y2="741" stroke="#000" stroke-width="1.2"/><line x1="836.5" y1="731" x2="836.5" y2="736" stroke="#000" stroke-width="1.2"/><line x1="843.5" y1="731" x2="843.5" y2="736" stroke="#000" stroke-width="1.2"/><line x1="850.5" y1="731" x2="850.5" y2="736" stroke="#000" stroke-width="1.2"/><line x1="857.5" y1="731" x2="857.5" y2="736" stroke="#000" stroke-width="1.2"/><line x1="864.5" y1="731" x2="864.5" y2="746" stroke="#000" stroke-width="1.2"/><line x1="870.5" y1="731" x2="870.5" y2="736" stroke="#000" stroke-width="1.2"/><line x1="877.5" y1="731" x2="877.5" y2="736" stroke="#000" stroke-width="1.2"/><line x1="884.5" y1="731" x2="884.5" y2="736" stroke="#000" stroke-width="1.2"/><line x1="891.5" y1="731" x2="891.5" y2="736" stroke="#000" stroke-width="1.2"/><line x1="897.5" y1="731" x2="897.5" y2="741" stroke="#000" stroke-width="1.2"/><line x1="904.5" y1="731" x2="904.5" y2="736" stroke="#000" stroke-width="1.2"/><line x1="911.5" y1="731" x2="911.5" y2="736" stroke="#000" stroke-width="1.2"/><line x1="918.5" y1="731" x2="918.5" y2="736" stroke="#000" stroke-width="1.2"/><line x1="925.5" y1="731" x2="925.5" y2="736" stroke="#000" stroke-width="1.2"/><line x1="931.5" y1="731" x2="931.5" y2="746" stroke="#000" stroke-width="1.2"/><line x1="938.5" y1="731" x2="938.5" y2="736" stroke="#000" stroke-width="1.2"/><line x1="945.5" y1="731" x2="945.5" y2="736" stroke="#000" stroke-width="1.2"/><line x1="952.5" y1="731" x2="952.5" y2="736" stroke="#000" stroke-width="1.2"/><line x1="958.5" y1="731" x2="958.5" y2="736" stroke="#000" stroke-width="1.2"/><line x1="965.5" y1="731" x2="965.5" y2="741" stroke="#000" stroke-width="1.2"/><line x1="972.5" y1="731" x2="972.5" y2="736" stroke="#000" stroke-width="1.2"/><line x1="979.5" y1="731" x2="979.5" y2="736" stroke="#000" stroke-width="1.2"/><line x1="986.5" y1="731" x2="986.5" y2="736" stroke="#000" stroke-width="1.2"/><line x1="992.5" y1="731" x2="992.5" y2="736" stroke="#000" stroke-width="1.2"/><line x1="999.5" y1="731" x2="999.5" y2="746" stroke="#000" stroke-width="1.2"/><line x1="1006.5" y1="731" x2="1006.5" y2="736" stroke="#000" stroke-width="1.2"/><line x1="1013.5" y1="731" x2="1013.5" y2="736" stroke="#000" stroke-width="1.2"/><line x1="1019.5" y1="731" x2="1019.5" y2="736" stroke="#000" stroke-width="1.2"/><line x1="1026.5" y1="731" x2="1026.5" y2="736" stroke="#000" stroke-width="1.2"/><line x1="1033.5" y1="731" x2="1033.5" y2="741" stroke="#000" stroke-width="1.2"/><line x1="1040.5" y1="731" x2="1040.5" y2="736" stroke="#000" stroke-width="1.2"/><line x1="1047.5" y1="731" x2="1047.5" y2="736" stroke="#000" stroke-width="1.2"/><line x1="1053.5" y1="731" x2="1053.5" y2="736" stroke="#000" stroke-width="1.2"/><line x1="1060.5" y1="731" x2="1060.5" y2="736" stroke="#000" stroke-width="1.2"/><line x1="1067.5" y1="731" x2="1067.5" y2="746" stroke="#000" stroke-width="1.2"/><line x1="1074.5" y1="731" x2="1074.5" y2="736" stroke="#000" stroke-width="1.2"/><line x1="1080.5" y1="731" x2="1080.5" y2="736" stroke="#000" stroke-width="1.2"/><line x1="1087.5" y1="731" x2="1087.5" y2="736" stroke="#000" stroke-width="1.2"/><line x1="1094.5" y1="731" x2="1094.5" y2="736" stroke="#000" stroke-width="1.2"/><line x1="1101.5" y1="731" x2="1101.5" y2="741" stroke="#000" stroke-width="1.2"/><line x1="1108.5" y1="731" x2="1108.5" y2="736" stroke="#000" stroke-width="1.2"/><line x1="1114.5" y1="731" x2="1114.5" y2="736" stroke="#000" stroke-width="1.2"/><line x1="1121.5" y1="731" x2="1121.5" y2="736" stroke="#000" stroke-width="1.2"/><line x1="1128.5" y1="731" x2="1128.5" y2="736" stroke="#000" stroke-width="1.2"/><line x1="1135.5" y1="731" x2="1135.5" y2="746" stroke="#000" stroke-width="1.2"/><line x1="1141.5" y1="731" x2="1141.5" y2="736" stroke="#000" stroke-width="1.2"/><line x1="1148.5" y1="731" x2="1148.5" y2="736" stroke="#000" stroke-width="1.2"/><line x1="1155.5" y1="731" x2="1155.5" y2="736" stroke="#000" stroke-width="1.2"/><line x1="1162.5" y1="731" x2="1162.5" y2="736" stroke="#000" stroke-width="1.2"/><line x1="1169.5" y1="731" x2="1169.5" y2="741" stroke="#000" stroke-width="1.2"/><line x1="1175.5" y1="731" x2="1175.5" y2="736" stroke="#000" stroke-width="1.2"/><line x1="1182.5" y1="731" x2="1182.5" y2="736" stroke="#000" stroke-width="1.2"/><line x1="1189.5" y1="731" x2="1189.5" y2="736" stroke="#000" stroke-width="1.2"/><line x1="1196.5" y1="731" x2="1196.5" y2="736" stroke="#000" stroke-width="1.2"/><line x1="1203.5" y1="731" x2="1203.5" y2="746" stroke="#000" stroke-width="1.2"/></svg>
<div class="t" style="left:495.27px;top:136.03px;font-size:9.30px;line-height:9.30px;letter-spacing:0.000px;color:#000">0,5</div>
<div class="t" style="left:495.27px;top:195.03px;font-size:9.30px;line-height:9.30px;letter-spacing:0.000px;color:#000">0,4</div>
<div class="t" style="left:495.27px;top:254.03px;font-size:9.30px;line-height:9.30px;letter-spacing:0.000px;color:#000">0,3</div>
<div class="t" style="left:495.27px;top:313.03px;font-size:9.30px;line-height:9.30px;letter-spacing:0.000px;color:#000">0,2</div>
<div class="t" style="left:495.27px;top:372.03px;font-size:9.30px;line-height:9.30px;letter-spacing:0.000px;color:#000">0,1</div>
<div class="t" style="left:495.27px;top:431.03px;font-size:9.30px;line-height:9.30px;letter-spacing:0.000px;color:#000">0,0</div>
<div class="t" style="left:492.18px;top:490.03px;font-size:9.30px;line-height:9.30px;letter-spacing:0.000px;color:#000">-0,1</div>
<div class="t" style="left:492.18px;top:549.03px;font-size:9.30px;line-height:9.30px;letter-spacing:0.000px;color:#000">-0,2</div>
<div class="t" style="left:492.18px;top:608.03px;font-size:9.30px;line-height:9.30px;letter-spacing:0.000px;color:#000">-0,3</div>
<div class="t" style="left:492.18px;top:667.03px;font-size:9.30px;line-height:9.30px;letter-spacing:0.000px;color:#000">-0,4</div>
<div class="t" style="left:492.18px;top:726.03px;font-size:9.30px;line-height:9.30px;letter-spacing:0.000px;color:#000">-0,5</div>
<div class="t" style="left:514.96px;top:748.33px;font-size:9.30px;line-height:9.30px;letter-spacing:0.000px;color:#000">3187</div>
<div class="t" style="left:582.76px;top:748.33px;font-size:9.30px;line-height:9.30px;letter-spacing:0.000px;color:#000">3188</div>
<div class="t" style="left:650.56px;top:748.33px;font-size:9.30px;line-height:9.30px;letter-spacing:0.000px;color:#000">3189</div>
<div class="t" style="left:718.36px;top:748.33px;font-size:9.30px;line-height:9.30px;letter-spacing:0.000px;color:#000">3190</div>
<div class="t" style="left:786.16px;top:748.33px;font-size:9.30px;line-height:9.30px;letter-spacing:0.000px;color:#000">3191</div>
<div class="t" style="left:853.96px;top:748.33px;font-size:9.30px;line-height:9.30px;letter-spacing:0.000px;color:#000">3192</div>
<div class="t" style="left:921.76px;top:748.33px;font-size:9.30px;line-height:9.30px;letter-spacing:0.000px;color:#000">3193</div>
<div class="t" style="left:989.56px;top:748.33px;font-size:9.30px;line-height:9.30px;letter-spacing:0.000px;color:#000">3194</div>
<div class="t" style="left:1057.36px;top:748.33px;font-size:9.30px;line-height:9.30px;letter-spacing:0.000px;color:#000">3195</div>
<div class="t" style="left:1125.16px;top:748.33px;font-size:9.30px;line-height:9.30px;letter-spacing:0.000px;color:#000">3196</div>
<div class="t" style="left:1192.96px;top:748.33px;font-size:9.30px;line-height:9.30px;letter-spacing:0.000px;color:#000">3197</div>
<div class="t" style="left:421.60px;top:436.87px;font-size:9.60px;line-height:9.60px;letter-spacing:0.039px;color:#000">p(t) in Pa</div>
<div class="t" style="left:838.00px;top:761.87px;font-size:9.60px;line-height:9.60px;letter-spacing:0.278px;color:#000">Zeit t in ms</div>
<div style="position:absolute;left:419px;top:789px;width:104px;height:43px;border:1px solid #dcdcdc"></div>
<div style="position:absolute;left:426px;top:786px;width:58px;height:9px;background:#fff"></div>
<div class="t" style="left:427.70px;top:784.87px;font-size:9.60px;line-height:9.60px;letter-spacing:0.168px;color:#000">Druckeinheit</div>
<div style="position:absolute;left:431px;top:803px;width:80px;height:20px;border:1px solid #cfcfcf;border-radius:3px;background:#fdfdfd;border-bottom-color:#b0b0b0"></div>
<div class="t" style="left:435.10px;top:808.67px;font-size:9.60px;line-height:9.60px;letter-spacing:-0.371px;color:#000">0,1 Pa</div>
<svg style="position:absolute;left:497.5px;top:810.5px" width="12" height="10"><path d="M0.8 0.8L4.8 4.8L8.8 0.8" fill="none" stroke="#444" stroke-width="1"/></svg>
<div style="position:absolute;left:1122px;top:789px;width:104px;height:43px;border:1px solid #dcdcdc"></div>
<div style="position:absolute;left:1128px;top:786px;width:49px;height:9px;background:#fff"></div>
<div class="t" style="left:1129.80px;top:784.57px;font-size:9.60px;line-height:9.60px;letter-spacing:0.111px;color:#000">Zeiteinheit</div>
<div style="position:absolute;left:1134px;top:803px;width:80px;height:20px;border:1px solid #cfcfcf;border-radius:3px;background:#fdfdfd;border-bottom-color:#b0b0b0"></div>
<div class="t" style="left:1138.40px;top:808.57px;font-size:9.60px;line-height:9.60px;letter-spacing:-0.067px;color:#000">1 ms</div>
<svg style="position:absolute;left:1200.5px;top:810.5px" width="12" height="10"><path d="M0.8 0.8L4.8 4.8L8.8 0.8" fill="none" stroke="#444" stroke-width="1"/></svg>
<div style="position:absolute;left:718px;top:787px;width:102px;height:22px;border:1px solid #d0d0d0;border-radius:4px;background:#fdfdfd"></div>
<div class="t" style="left:743.50px;top:794.07px;font-size:9.60px;line-height:9.60px;letter-spacing:0.062px;color:#000">Hilfe: Zoom</div>
<div style="position:absolute;left:824px;top:787px;width:102px;height:22px;border:1px solid #d0d0d0;border-radius:4px;background:#fdfdfd"></div>
<div class="t" style="left:831.30px;top:794.07px;font-size:9.60px;line-height:9.60px;letter-spacing:0.050px;color:#000">Fadenkreuz löschen</div>
<div style="position:absolute;left:718px;top:812px;width:102px;height:22px;border:1px solid #d0d0d0;border-radius:4px;background:#fdfdfd"></div>
<div class="t" style="left:747.30px;top:819.07px;font-size:9.60px;line-height:9.60px;letter-spacing:0.030px;color:#000">Schaubild</div>
<div style="position:absolute;left:824px;top:812px;width:102px;height:22px;border:1px solid #d0d0d0;border-radius:4px;background:#fdfdfd"></div>
<div class="t" style="left:860.40px;top:819.07px;font-size:9.60px;line-height:9.60px;letter-spacing:-0.287px;color:#000">Tabelle</div>
<div style="position:absolute;left:415px;top:836px;width:815px;height:20px;background:#f0f0f0;border-top:1px solid #c8c8c8"></div>
<div style="position:absolute;left:534px;top:840px;width:1px;height:14px;background:#d8d8d8"></div>
<div style="position:absolute;left:734px;top:840px;width:1px;height:14px;background:#d8d8d8"></div>
<div style="position:absolute;left:934px;top:840px;width:1px;height:14px;background:#d8d8d8"></div>
<div class="t" style="left:448.70px;top:842.77px;font-size:9.60px;line-height:9.60px;letter-spacing:-0.096px;color:#000">Fadenkreuz:</div>
<div class="t" style="left:605.20px;top:842.97px;font-size:9.60px;line-height:9.60px;letter-spacing:-0.050px;color:#000">t= 3191,82 ms</div>
<div class="t" style="left:805.40px;top:842.87px;font-size:9.60px;line-height:9.60px;letter-spacing:-0.039px;color:#000">p(t)= 0,466 Pa</div>
<svg style="position:absolute;left:1217px;top:846px" width="10" height="10"><g fill="#a8a8a8"><rect x="6" y="0" width="2" height="2"/><rect x="3" y="3" width="2" height="2"/><rect x="6" y="3" width="2" height="2"/><rect x="0" y="6" width="2" height="2"/><rect x="3" y="6" width="2" height="2"/><rect x="6" y="6" width="2" height="2"/></g></svg>
<div style="position:absolute;left:17px;top:92px;width:384px;height:461px;border:1px solid #4a4a4a;border-radius:4px 4px 0 0;box-shadow:inset 1px 1px 0 #eef3f8,inset -1px -1px 0 #f6f9fc;background:linear-gradient(#c3d1df,#d7e4f1 27px,#d7e4f1)"></div>
<svg style="position:absolute;left:27px;top:103px" width="16" height="16" viewBox="0 0 16 16"><rect width="16" height="16" fill="#0000b0"/><g fill="#b00000"><polygon points="8.0,8.0 4.83,-10.94 11.17,-10.94"/><polygon points="8.0,8.0 16.57,-9.18 21.69,-5.46"/><polygon points="8.0,8.0 25.03,-0.87 26.99,5.16"/><polygon points="8.0,8.0 26.99,10.84 25.03,16.87"/><polygon points="8.0,8.0 21.69,21.46 16.57,25.18"/><polygon points="8.0,8.0 11.17,26.94 4.83,26.94"/><polygon points="8.0,8.0 -0.57,25.18 -5.69,21.46"/><polygon points="8.0,8.0 -9.03,16.87 -10.99,10.84"/><polygon points="8.0,8.0 -10.99,5.16 -9.03,-0.87"/><polygon points="8.0,8.0 -5.69,-5.46 -0.57,-9.18"/></g><polygon points="8.0,3.5 13.0,8.0 8.0,12.5 3.0,8.0" fill="#0000b8"/></svg>
<div class="t" style="left:47.00px;top:106.48px;font-size:11.60px;line-height:11.60px;letter-spacing:0.156px;color:#9ea3aa">Töne- und Klanggenerator</div>
<div style="position:absolute;left:291.5px;top:102.6px;width:31px;height:17px;border:1px solid #8a96ab;border-radius:3px;background:linear-gradient(#ccd9e7,#c5d3e2)"></div>
<div style="position:absolute;left:325.5px;top:102.6px;width:31px;height:17px;border:1px solid #8a96ab;border-radius:3px;background:linear-gradient(#ccd9e7,#c5d3e2)"></div>
<div style="position:absolute;left:359.5px;top:102.6px;width:31px;height:17px;border:1px solid #8a96ab;border-radius:3px;background:linear-gradient(#ccd9e7,#c5d3e2)"></div>
<svg style="position:absolute;left:291.5px;top:102.6px" width="31" height="17"><rect x="10.5" y="8.5" width="11" height="4" rx="1.2" fill="#f4f4f4" stroke="#3a3a3a"/></svg>
<svg style="position:absolute;left:325.5px;top:102.6px" width="31" height="17"><rect x="10.5" y="4.5" width="10" height="8" rx="1.2" fill="#f4f4f4" stroke="#3a3a3a"/><rect x="13.5" y="7.5" width="4" height="2" fill="none" stroke="#3a3a3a"/></svg>
<svg style="position:absolute;left:359.5px;top:102.6px" width="31" height="17"><path d="M12.8 5.8L18.2 11.2M18.2 5.8L12.8 11.2" stroke="#3a3a3a" stroke-width="4.2" stroke-linecap="square"/><path d="M12.8 5.8L18.2 11.2M18.2 5.8L12.8 11.2" stroke="#f4f4f4" stroke-width="2.2" stroke-linecap="square"/></svg>
<div style="position:absolute;left:25px;top:123px;width:368px;height:430px;background:#fff"></div>
<div style="position:absolute;left:25.5px;top:142px;width:366px;height:411px;background:#f9f9f9;border:1px solid #dadada"></div>
<div style="position:absolute;left:70.5px;top:125px;width:41px;height:18px;background:#f0f0f0;border:1px solid #dadada"></div>
<div style="position:absolute;left:110.5px;top:125px;width:50px;height:18px;background:#f0f0f0;border:1px solid #dadada"></div>
<div style="position:absolute;left:160.2px;top:125px;width:54px;height:18px;background:#f0f0f0;border:1px solid #dadada"></div>
<div style="position:absolute;left:26px;top:123.5px;width:45px;height:20px;background:#f9f9f9;border:1px solid #dadada;border-bottom:none"></div>
<div class="t" style="left:33.60px;top:128.27px;font-size:9.60px;line-height:9.60px;letter-spacing:-0.326px;color:#000">Töne</div>
<div class="t" style="left:75.30px;top:129.87px;font-size:9.60px;line-height:9.60px;letter-spacing:-0.158px;color:#000">Puls</div>
<div class="t" style="left:117.00px;top:129.87px;font-size:9.60px;line-height:9.60px;letter-spacing:0.287px;color:#000">Tonfolge</div>
<div class="t" style="left:167.20px;top:129.87px;font-size:9.60px;line-height:9.60px;letter-spacing:-0.089px;color:#000">Rauschen</div>
<div style="position:absolute;left:31px;top:156.6px;width:168px;height:102px;border:1px solid #dcdcdc"></div>
<div style="position:absolute;left:37px;top:152px;width:104px;height:9px;background:#f9f9f9"></div>
<div class="t" style="left:39.40px;top:152.37px;font-size:9.60px;line-height:9.60px;letter-spacing:0.127px;color:#000">Ausgabemöglichkeiten</div>
<svg style="position:absolute;left:37.8px;top:171.7px" width="14" height="14"><circle cx="7" cy="7" r="6" fill="#f5f5f5" stroke="#555" stroke-width="1"/></svg>
<svg style="position:absolute;left:37.8px;top:202.5px" width="14" height="14"><circle cx="7" cy="7" r="6.5" fill="#005fb8"/><circle cx="7" cy="7" r="2.8" fill="#fff"/></svg>
<svg style="position:absolute;left:37.8px;top:233.5px" width="14" height="14"><circle cx="7" cy="7" r="6" fill="#f5f5f5" stroke="#555" stroke-width="1"/></svg>
<div class="t" style="left:54.50px;top:173.87px;font-size:9.60px;line-height:9.60px;letter-spacing:0.049px;color:#000">Stereo: Beide Töne getrennt</div>
<div class="t" style="left:54.50px;top:204.57px;font-size:9.60px;line-height:9.60px;letter-spacing:0.178px;color:#000">Mono: Beide Töne überlagert</div>
<div class="t" style="left:54.50px;top:235.57px;font-size:9.60px;line-height:9.60px;letter-spacing:0.408px;color:#000">Mono: Nur Ton 1</div>
<div style="position:absolute;left:204.4px;top:149.3px;width:168px;height:26px;border:1px solid #d0d0d0;border-radius:4px;background:#fdfdfd"></div>
<div class="t" style="left:248.00px;top:157.77px;font-size:9.60px;line-height:9.60px;letter-spacing:0.057px;color:#000">Start Tongenerator</div>
<div style="position:absolute;left:31px;top:270.5px;width:358px;height:90px;border:1px solid #dcdcdc;border-right:none"></div>
<div style="position:absolute;left:37px;top:265px;width:99px;height:10px;background:#f9f9f9"></div>
<div class="t" style="left:39.40px;top:266.07px;font-size:9.60px;line-height:9.60px;letter-spacing:0.154px;color:#000">Ton 1 (Nullphase = 0)</div>
<div class="t" style="left:41.00px;top:298.97px;font-size:9.60px;line-height:9.60px;letter-spacing:0.124px;color:#000">Frequenz in Hz:</div>
<div style="position:absolute;left:120.3px;top:293.0px;width:76.5px;height:20.6px;background:#fff;border:1px solid #e6e6e6;border-bottom:1px solid #6e6e6e;border-radius:2px"></div>
<div class="t" style="left:122.70px;top:297.67px;font-size:9.60px;line-height:9.60px;letter-spacing:-0.158px;color:#000">440</div>
<svg style="position:absolute;left:179.8px;top:295.6px" width="15" height="16"><rect x="1.5" y="1.5" width="12" height="6.5" rx="3" fill="#fff" stroke="#d8d8d8"/><rect x="1.5" y="8.5" width="12" height="6.5" rx="3" fill="#fff" stroke="#d8d8d8"/><path d="M3.5 7L7.5 2.6L11.5 7Z" fill="#111"/><path d="M3.5 9L7.5 13.4L11.5 9Z" fill="#111"/></svg>
<div class="t" style="left:223.30px;top:298.87px;font-size:9.60px;line-height:9.60px;letter-spacing:-0.115px;color:#000">Schrittweite:</div>
<div style="position:absolute;left:287.3px;top:293px;width:71px;height:20px;background:#fdfdfd;border:1px solid #d4d4d4;border-bottom:1px solid #a8a8a8;border-radius:3px"></div>
<div class="t" style="left:291.50px;top:298.87px;font-size:9.60px;line-height:9.60px;letter-spacing:-0.180px;color:#000">5 Hz</div>
<svg style="position:absolute;left:344.8px;top:300.5px" width="12" height="8"><path d="M0.8 0.8L4.8 4.8L8.8 0.8" fill="none" stroke="#444" stroke-width="1"/></svg>
<div class="t" style="left:41.00px;top:324.87px;font-size:9.60px;line-height:9.60px;letter-spacing:0.157px;color:#000">Amplitude in %:</div>
<div style="position:absolute;left:120.3px;top:318.9px;width:76.5px;height:20.6px;background:#fff;border:1px solid #e6e6e6;border-bottom:1px solid #6e6e6e;border-radius:2px"></div>
<div class="t" style="left:123.30px;top:323.27px;font-size:9.60px;line-height:9.60px;letter-spacing:-0.458px;color:#000">100</div>
<svg style="position:absolute;left:179.8px;top:321.5px" width="15" height="16"><rect x="1.5" y="1.5" width="12" height="6.5" rx="3" fill="#fff" stroke="#d8d8d8"/><rect x="1.5" y="8.5" width="12" height="6.5" rx="3" fill="#fff" stroke="#d8d8d8"/><path d="M3.5 7L7.5 2.6L11.5 7Z" fill="#111"/><path d="M3.5 9L7.5 13.4L11.5 9Z" fill="#111"/></svg>
<div class="t" style="left:223.30px;top:324.87px;font-size:9.60px;line-height:9.60px;letter-spacing:-0.115px;color:#000">Schrittweite:</div>
<div style="position:absolute;left:287.3px;top:319px;width:71px;height:20px;background:#fdfdfd;border:1px solid #d4d4d4;border-bottom:1px solid #a8a8a8;border-radius:3px"></div>
<div class="t" style="left:291.50px;top:324.87px;font-size:9.60px;line-height:9.60px;letter-spacing:-0.271px;color:#000">5 %</div>
<svg style="position:absolute;left:344.8px;top:326.5px" width="12" height="8"><path d="M0.8 0.8L4.8 4.8L8.8 0.8" fill="none" stroke="#444" stroke-width="1"/></svg>
<div style="position:absolute;left:31px;top:372px;width:358px;height:141px;border:1px solid #dcdcdc;border-right:none"></div>
<div style="position:absolute;left:37px;top:367px;width:28px;height:10px;background:#f9f9f9"></div>
<div class="t" style="left:39.40px;top:367.17px;font-size:9.60px;line-height:9.60px;letter-spacing:0.054px;color:#000">Ton 2</div>
<div class="t" style="left:40.00px;top:400.87px;font-size:9.60px;line-height:9.60px;letter-spacing:0.082px;color:#000">Frequenz in Hz:</div>
<div style="position:absolute;left:119.0px;top:394.9px;width:76.5px;height:20.6px;background:#fff;border:1px solid #e6e6e6;border-bottom:1px solid #6e6e6e;border-radius:2px"></div>
<div class="t" style="left:121.70px;top:399.87px;font-size:9.60px;line-height:9.60px;letter-spacing:-0.008px;color:#000">450</div>
<svg style="position:absolute;left:178.5px;top:397.5px" width="15" height="16"><rect x="1.5" y="1.5" width="12" height="6.5" rx="3" fill="#fff" stroke="#d8d8d8"/><rect x="1.5" y="8.5" width="12" height="6.5" rx="3" fill="#fff" stroke="#d8d8d8"/><path d="M3.5 7L7.5 2.6L11.5 7Z" fill="#111"/><path d="M3.5 9L7.5 13.4L11.5 9Z" fill="#111"/></svg>
<div class="t" style="left:222.00px;top:400.87px;font-size:9.60px;line-height:9.60px;letter-spacing:-0.107px;color:#000">Schrittweite:</div>
<div style="position:absolute;left:286px;top:395px;width:71px;height:20px;background:#fdfdfd;border:1px solid #d4d4d4;border-bottom:1px solid #a8a8a8;border-radius:3px"></div>
<div class="t" style="left:290.20px;top:400.87px;font-size:9.60px;line-height:9.60px;letter-spacing:-0.180px;color:#000">5 Hz</div>
<svg style="position:absolute;left:343.5px;top:402.5px" width="12" height="8"><path d="M0.8 0.8L4.8 4.8L8.8 0.8" fill="none" stroke="#444" stroke-width="1"/></svg>
<div class="t" style="left:40.00px;top:427.37px;font-size:9.60px;line-height:9.60px;letter-spacing:0.157px;color:#000">Amplitude in %:</div>
<div style="position:absolute;left:119.0px;top:421.09999999999997px;width:76.5px;height:20.6px;background:#fff;border:1px solid #e6e6e6;border-bottom:1px solid #6e6e6e;border-radius:2px"></div>
<div class="t" style="left:121.70px;top:425.87px;font-size:9.60px;line-height:9.60px;letter-spacing:-0.008px;color:#000">100</div>
<svg style="position:absolute;left:178.5px;top:423.7px" width="15" height="16"><rect x="1.5" y="1.5" width="12" height="6.5" rx="3" fill="#fff" stroke="#d8d8d8"/><rect x="1.5" y="8.5" width="12" height="6.5" rx="3" fill="#fff" stroke="#d8d8d8"/><path d="M3.5 7L7.5 2.6L11.5 7Z" fill="#111"/><path d="M3.5 9L7.5 13.4L11.5 9Z" fill="#111"/></svg>
<div class="t" style="left:222.00px;top:427.37px;font-size:9.60px;line-height:9.60px;letter-spacing:-0.107px;color:#000">Schrittweite:</div>
<div style="position:absolute;left:286px;top:421.5px;width:71px;height:20px;background:#fdfdfd;border:1px solid #d4d4d4;border-bottom:1px solid #a8a8a8;border-radius:3px"></div>
<div class="t" style="left:290.20px;top:427.37px;font-size:9.60px;line-height:9.60px;letter-spacing:-0.271px;color:#000">5 %</div>
<svg style="position:absolute;left:343.5px;top:429.0px" width="12" height="8"><path d="M0.8 0.8L4.8 4.8L8.8 0.8" fill="none" stroke="#444" stroke-width="1"/></svg>
<div class="t" style="left:33.60px;top:458.47px;font-size:9.60px;line-height:9.60px;letter-spacing:-0.129px;color:#000">Nullphase:</div>
<div class="t" style="left:40.00px;top:485.67px;font-size:9.60px;line-height:9.60px;letter-spacing:-0.003px;color:#000">in Pi/100:</div>
<div style="position:absolute;left:119.0px;top:479.79999999999995px;width:76.5px;height:20.6px;background:#fff;border:1px solid #e6e6e6;border-bottom:1px solid #6e6e6e;border-radius:2px"></div>
<div class="t" style="left:121.70px;top:484.07px;font-size:9.60px;line-height:9.60px;letter-spacing:0.000px;color:#000">0</div>
<svg style="position:absolute;left:178.5px;top:482.4px" width="15" height="16"><rect x="1.5" y="1.5" width="12" height="6.5" rx="3" fill="#fff" stroke="#d8d8d8"/><rect x="1.5" y="8.5" width="12" height="6.5" rx="3" fill="#fff" stroke="#d8d8d8"/><path d="M3.5 7L7.5 2.6L11.5 7Z" fill="#111"/><path d="M3.5 9L7.5 13.4L11.5 9Z" fill="#111"/></svg>
<div class="t" style="left:222.00px;top:485.67px;font-size:9.60px;line-height:9.60px;letter-spacing:-0.107px;color:#000">Schrittweite:</div>
<div style="position:absolute;left:286px;top:480px;width:71px;height:20px;background:#fdfdfd;border:1px solid #d4d4d4;border-bottom:1px solid #a8a8a8;border-radius:3px"></div>
<div class="t" style="left:290.20px;top:485.67px;font-size:9.60px;line-height:9.60px;letter-spacing:-0.046px;color:#000">5 Pi/100</div>
<svg style="position:absolute;left:343.5px;top:487.5px" width="12" height="8"><path d="M0.8 0.8L4.8 4.8L8.8 0.8" fill="none" stroke="#444" stroke-width="1"/></svg>
<div style="position:absolute;left:17px;top:690px;width:395px;height:180px;border:1px solid #4a4a4a;border-radius:4px 4px 0 0;box-shadow:inset 1px 1px 0 #eef3f8,inset -1px -1px 0 #f6f9fc;background:linear-gradient(#c3d1df,#d7e4f1 27px,#d7e4f1)"></div>
<svg style="position:absolute;left:27px;top:699px" width="16" height="16" viewBox="0 0 16 16"><rect width="16" height="16" fill="#0000b0"/><g fill="#b00000"><polygon points="8.0,8.0 4.83,-10.94 11.17,-10.94"/><polygon points="8.0,8.0 16.57,-9.18 21.69,-5.46"/><polygon points="8.0,8.0 25.03,-0.87 26.99,5.16"/><polygon points="8.0,8.0 26.99,10.84 25.03,16.87"/><polygon points="8.0,8.0 21.69,21.46 16.57,25.18"/><polygon points="8.0,8.0 11.17,26.94 4.83,26.94"/><polygon points="8.0,8.0 -0.57,25.18 -5.69,21.46"/><polygon points="8.0,8.0 -9.03,16.87 -10.99,10.84"/><polygon points="8.0,8.0 -10.99,5.16 -9.03,-0.87"/><polygon points="8.0,8.0 -5.69,-5.46 -0.57,-9.18"/></g><polygon points="8.0,3.5 13.0,8.0 8.0,12.5 3.0,8.0" fill="#0000b8"/></svg>
<div style="position:absolute;left:302px;top:698px;width:31px;height:17px;border:1px solid #8a96ab;border-radius:3px;background:linear-gradient(#ccd9e7,#c5d3e2)"></div>
<div style="position:absolute;left:336px;top:698px;width:31px;height:17px;border:1px solid #8a96ab;border-radius:3px;background:linear-gradient(#ccd9e7,#c5d3e2)"></div>
<div style="position:absolute;left:370px;top:698px;width:31px;height:17px;border:1px solid #8a96ab;border-radius:3px;background:linear-gradient(#ccd9e7,#c5d3e2)"></div>
<div style="position:absolute;left:25px;top:718px;width:379px;height:144px;background:#fff"></div>
<div style="position:absolute;left:35px;top:850px;width:359px;height:7px;border:1px solid #1aa0e8;border-top:none"></div>
<div style="position:absolute;left:6px;top:541px;width:400px;height:156px;border:1px solid #4a4a4a;border-radius:4px 4px 0 0;box-shadow:inset 1px 1px 0 #eef3f8,inset -1px -1px 0 #f6f9fc;background:linear-gradient(#c3d1df,#d7e4f1 27px,#d7e4f1)"></div>
<svg style="position:absolute;left:16px;top:552px" width="16" height="16" viewBox="0 0 16 16"><rect width="16" height="16" fill="#0000b0"/><g fill="#b00000"><polygon points="8.0,8.0 4.83,-10.94 11.17,-10.94"/><polygon points="8.0,8.0 16.57,-9.18 21.69,-5.46"/><polygon points="8.0,8.0 25.03,-0.87 26.99,5.16"/><polygon points="8.0,8.0 26.99,10.84 25.03,16.87"/><polygon points="8.0,8.0 21.69,21.46 16.57,25.18"/><polygon points="8.0,8.0 11.17,26.94 4.83,26.94"/><polygon points="8.0,8.0 -0.57,25.18 -5.69,21.46"/><polygon points="8.0,8.0 -9.03,16.87 -10.99,10.84"/><polygon points="8.0,8.0 -10.99,5.16 -9.03,-0.87"/><polygon points="8.0,8.0 -5.69,-5.46 -0.57,-9.18"/></g><polygon points="8.0,3.5 13.0,8.0 8.0,12.5 3.0,8.0" fill="#0000b8"/></svg>
<div class="t" style="left:36.00px;top:554.58px;font-size:11.60px;line-height:11.60px;letter-spacing:-0.018px;color:#9ea3aa">LZF: Schallpegel mit Zeitbewertung FAST</div>
<div style="position:absolute;left:296px;top:551px;width:31px;height:17px;border:1px solid #8a96ab;border-radius:3px;background:linear-gradient(#ccd9e7,#c5d3e2)"></div>
<div style="position:absolute;left:330px;top:551px;width:31px;height:17px;border:1px solid #8a96ab;border-radius:3px;background:linear-gradient(#ccd9e7,#c5d3e2)"></div>
<div style="position:absolute;left:364px;top:551px;width:31px;height:17px;border:1px solid #8a96ab;border-radius:3px;background:linear-gradient(#ccd9e7,#c5d3e2)"></div>
<svg style="position:absolute;left:296px;top:551px" width="31" height="17"><rect x="10.5" y="8.5" width="11" height="4" rx="1.2" fill="#f4f4f4" stroke="#3a3a3a"/></svg>
<svg style="position:absolute;left:330px;top:551px" width="31" height="17"><rect x="10.5" y="4.5" width="10" height="8" rx="1.2" fill="#f4f4f4" stroke="#3a3a3a"/><rect x="13.5" y="7.5" width="4" height="2" fill="none" stroke="#3a3a3a"/></svg>
<svg style="position:absolute;left:364px;top:551px" width="31" height="17"><path d="M12.8 5.8L18.2 11.2M18.2 5.8L12.8 11.2" stroke="#3a3a3a" stroke-width="4.2" stroke-linecap="square"/><path d="M12.8 5.8L18.2 11.2M18.2 5.8L12.8 11.2" stroke="#f4f4f4" stroke-width="2.2" stroke-linecap="square"/></svg>
<div style="position:absolute;left:14px;top:572px;width:384px;height:117px;background:#fff"></div>
<svg style="position:absolute;left:0;top:0;overflow:visible" width="1" height="1"><rect x="36" y="592" width="4" height="73" fill="#00ff00"/><rect x="43" y="592" width="3" height="73" fill="#00ff00"/><rect x="50" y="592" width="3" height="73" fill="#00ff00"/><rect x="57" y="592" width="3" height="73" fill="#00ff00"/><rect x="63" y="592" width="4" height="73" fill="#00ff00"/><rect x="70" y="592" width="4" height="73" fill="#00ff00"/><rect x="77" y="592" width="4" height="73" fill="#00ff00"/><rect x="84" y="592" width="4" height="73" fill="#00ff00"/><rect x="91" y="592" width="3" height="73" fill="#00ff00"/><rect x="98" y="592" width="3" height="73" fill="#00ff00"/><rect x="105" y="592" width="3" height="73" fill="#00ff00"/><rect x="111" y="592" width="4" height="73" fill="#00ff00"/><rect x="118" y="592" width="4" height="73" fill="#00ff00"/><rect x="125" y="592" width="4" height="73" fill="#00ff00"/><rect x="132" y="592" width="4" height="73" fill="#00ff00"/><rect x="139" y="592" width="3" height="73" fill="#00ff00"/><rect x="146" y="592" width="3" height="73" fill="#00ff00"/><rect x="153" y="592" width="3" height="73" fill="#00ff00"/><rect x="159" y="592" width="4" height="73" fill="#00ff00"/><rect x="166" y="592" width="4" height="73" fill="#00ff00"/><rect x="173" y="592" width="4" height="73" fill="#00ff00"/><rect x="180" y="592" width="4" height="73" fill="#00ff00"/><rect x="187" y="592" width="3" height="73" fill="#00ff00"/><rect x="194" y="592" width="3" height="73" fill="#00ff00"/><rect x="201" y="592" width="3" height="73" fill="#00ff00"/><rect x="207" y="592" width="4" height="73" fill="#00ff00"/><rect x="214" y="592" width="4" height="73" fill="#00ff00"/><rect x="221" y="592" width="4" height="73" fill="#00ff00"/><rect x="228" y="592" width="4" height="73" fill="#00ff00"/><rect x="235" y="592" width="3" height="73" fill="#00ff00"/><rect x="242" y="592" width="3" height="73" fill="#ffc800"/><rect x="249" y="592" width="3" height="73" fill="#ffffb8"/><rect x="255" y="592" width="4" height="73" fill="#ffffb8"/><rect x="262" y="592" width="4" height="73" fill="#ffffb8"/><rect x="269" y="592" width="4" height="73" fill="#ffffb8"/><rect x="276" y="592" width="4" height="73" fill="#ffd0d0"/><rect x="283" y="592" width="3" height="73" fill="#ffd0d0"/><rect x="290" y="592" width="3" height="73" fill="#ffd0d0"/><rect x="297" y="592" width="3" height="73" fill="#ffd0d0"/><rect x="304" y="592" width="3" height="73" fill="#ffd0d0"/><rect x="310" y="592" width="4" height="73" fill="#ffd0d0"/><rect x="317" y="592" width="4" height="73" fill="#ffd0d0"/><rect x="324" y="592" width="4" height="73" fill="#ffd0d0"/><rect x="331" y="592" width="3" height="73" fill="#ffd0d0"/><rect x="338" y="592" width="3" height="73" fill="#ffd0d0"/><rect x="345" y="592" width="3" height="73" fill="#ffd0d0"/><rect x="352" y="592" width="3" height="73" fill="#ffd0d0"/><rect x="358" y="592" width="4" height="73" fill="#ffd0d0"/><rect x="365" y="592" width="4" height="73" fill="#ffd0d0"/><rect x="372" y="592" width="4" height="73" fill="#ffd0d0"/></svg>
<div class="t big" style="left:117.00px;top:605.00px;font-size:56.00px;line-height:56.00px;letter-spacing:-2.456px;color:#000">81,6 dB</div>
<div class="t" style="left:79.70px;top:671.17px;font-size:9.60px;line-height:9.60px;letter-spacing:0.366px;color:#000">LZeq: 79,9 dB</div>
<div class="t" style="left:263.50px;top:671.17px;font-size:9.60px;line-height:9.60px;letter-spacing:0.291px;color:#000">LZFmax: 83,1 dB</div>
<div style="position:absolute;left:23px;top:701px;width:372px;height:150px;border:1px solid #1a1a1a;border-radius:4px 4px 0 0;box-shadow:inset 1px 1px 0 #f4f8fc,inset -1px -1px 0 #30d0f0;background:linear-gradient(#9ab3cf,#b3c9e2 28px,#b9cfe8 30px,#b9cfe8)"></div>
<svg style="position:absolute;left:33px;top:712px" width="16" height="16" viewBox="0 0 16 16"><rect width="16" height="16" fill="#0000b0"/><g fill="#b00000"><polygon points="8.0,8.0 4.83,-10.94 11.17,-10.94"/><polygon points="8.0,8.0 16.57,-9.18 21.69,-5.46"/><polygon points="8.0,8.0 25.03,-0.87 26.99,5.16"/><polygon points="8.0,8.0 26.99,10.84 25.03,16.87"/><polygon points="8.0,8.0 21.69,21.46 16.57,25.18"/><polygon points="8.0,8.0 11.17,26.94 4.83,26.94"/><polygon points="8.0,8.0 -0.57,25.18 -5.69,21.46"/><polygon points="8.0,8.0 -9.03,16.87 -10.99,10.84"/><polygon points="8.0,8.0 -10.99,5.16 -9.03,-0.87"/><polygon points="8.0,8.0 -5.69,-5.46 -0.57,-9.18"/></g><polygon points="8.0,3.5 13.0,8.0 8.0,12.5 3.0,8.0" fill="#0000b8"/></svg>
<div class="t" style="left:53.10px;top:715.28px;font-size:11.60px;line-height:11.60px;letter-spacing:0.070px;color:#000">LAS: A-bewerteter Schallpegel mit Zeitbe...</div>
<div style="position:absolute;left:285.5px;top:711.4px;width:31px;height:17px;border:1px solid #6f7f98;border-radius:3px;background:linear-gradient(#c7d7ea,#bccfe5 45%,#a3bad6 50%,#b5cbe4)"></div>
<div style="position:absolute;left:319.5px;top:711.4px;width:31px;height:17px;border:1px solid #6f7f98;border-radius:3px;background:linear-gradient(#c7d7ea,#bccfe5 45%,#a3bad6 50%,#b5cbe4)"></div>
<div style="position:absolute;left:353.5px;top:711.4px;width:31px;height:17px;border:1px solid #6b2a2a;border-radius:3px;background:linear-gradient(#e8a79a,#dd8a78 45%,#c4452a 50%,#d3664d)"></div>
<svg style="position:absolute;left:285.5px;top:711.4px" width="31" height="17"><rect x="10.5" y="8.5" width="11" height="4" rx="1.2" fill="#f4f4f4" stroke="#3a3a3a"/></svg>
<svg style="position:absolute;left:319.5px;top:711.4px" width="31" height="17"><rect x="10.5" y="4.5" width="10" height="8" rx="1.2" fill="#f4f4f4" stroke="#3a3a3a"/><rect x="13.5" y="7.5" width="4" height="2" fill="none" stroke="#3a3a3a"/></svg>
<svg style="position:absolute;left:353.5px;top:711.4px" width="31" height="17"><path d="M12.8 5.8L18.2 11.2M18.2 5.8L12.8 11.2" stroke="#3a3a3a" stroke-width="4.2" stroke-linecap="square"/><path d="M12.8 5.8L18.2 11.2M18.2 5.8L12.8 11.2" stroke="#f4f4f4" stroke-width="2.2" stroke-linecap="square"/></svg>
<div style="position:absolute;left:31px;top:732px;width:356px;height:111px;background:#fff"></div>
<svg style="position:absolute;left:0;top:0;overflow:visible" width="1" height="1"><rect x="53" y="752" width="3" height="68" fill="#00ff00"/><rect x="59" y="752" width="3" height="68" fill="#00ff00"/><rect x="65" y="752" width="4" height="68" fill="#00ff00"/><rect x="72" y="752" width="3" height="68" fill="#00ff00"/><rect x="78" y="752" width="3" height="68" fill="#00ff00"/><rect x="84" y="752" width="3" height="68" fill="#00ff00"/><rect x="91" y="752" width="3" height="68" fill="#00ff00"/><rect x="97" y="752" width="3" height="68" fill="#00ff00"/><rect x="103" y="752" width="3" height="68" fill="#00ff00"/><rect x="109" y="752" width="4" height="68" fill="#00ff00"/><rect x="116" y="752" width="3" height="68" fill="#00ff00"/><rect x="122" y="752" width="3" height="68" fill="#00ff00"/><rect x="128" y="752" width="3" height="68" fill="#00ff00"/><rect x="135" y="752" width="3" height="68" fill="#00ff00"/><rect x="141" y="752" width="3" height="68" fill="#00ff00"/><rect x="147" y="752" width="3" height="68" fill="#00ff00"/><rect x="153" y="752" width="4" height="68" fill="#00ff00"/><rect x="160" y="752" width="3" height="68" fill="#00ff00"/><rect x="166" y="752" width="3" height="68" fill="#00ff00"/><rect x="172" y="752" width="3" height="68" fill="#00ff00"/><rect x="179" y="752" width="3" height="68" fill="#00ff00"/><rect x="185" y="752" width="3" height="68" fill="#00ff00"/><rect x="191" y="752" width="3" height="68" fill="#00ff00"/><rect x="197" y="752" width="4" height="68" fill="#00ff00"/><rect x="204" y="752" width="3" height="68" fill="#00ff00"/><rect x="210" y="752" width="3" height="68" fill="#00ff00"/><rect x="216" y="752" width="3" height="68" fill="#00ff00"/><rect x="223" y="752" width="3" height="68" fill="#00ff00"/><rect x="229" y="752" width="3" height="68" fill="#d0ffd0"/><rect x="235" y="752" width="3" height="68" fill="#d0ffd0"/><rect x="241" y="752" width="4" height="68" fill="#ffffb8"/><rect x="248" y="752" width="3" height="68" fill="#ffffb8"/><rect x="254" y="752" width="3" height="68" fill="#ffffb8"/><rect x="260" y="752" width="4" height="68" fill="#ffffb8"/><rect x="267" y="752" width="3" height="68" fill="#ffffb8"/><rect x="273" y="752" width="3" height="68" fill="#ffd0d0"/><rect x="279" y="752" width="3" height="68" fill="#ffd0d0"/><rect x="285" y="752" width="4" height="68" fill="#ffd0d0"/><rect x="292" y="752" width="3" height="68" fill="#ffd0d0"/><rect x="298" y="752" width="3" height="68" fill="#ffd0d0"/><rect x="304" y="752" width="4" height="68" fill="#ffd0d0"/><rect x="311" y="752" width="3" height="68" fill="#ffd0d0"/><rect x="317" y="752" width="3" height="68" fill="#ffd0d0"/><rect x="323" y="752" width="3" height="68" fill="#ffd0d0"/><rect x="329" y="752" width="4" height="68" fill="#ffd0d0"/><rect x="336" y="752" width="3" height="68" fill="#ffd0d0"/><rect x="342" y="752" width="3" height="68" fill="#ffd0d0"/><rect x="348" y="752" width="4" height="68" fill="#ffd0d0"/><rect x="355" y="752" width="3" height="68" fill="#ffd0d0"/><rect x="361" y="752" width="3" height="68" fill="#ffd0d0"/></svg>
<div class="t big" style="left:95.10px;top:764.17px;font-size:50.00px;line-height:50.00px;letter-spacing:-1.211px;color:#000">75,7 dB(A)</div>
<div class="t" style="left:83.70px;top:826.87px;font-size:9.60px;line-height:9.60px;letter-spacing:0.291px;color:#000">LAeq: 75,8 dB(A)</div>
<div class="t" style="left:251.60px;top:826.87px;font-size:9.60px;line-height:9.60px;letter-spacing:0.276px;color:#000">LASmax: 75,7 dB(A)</div>
</body></html>
